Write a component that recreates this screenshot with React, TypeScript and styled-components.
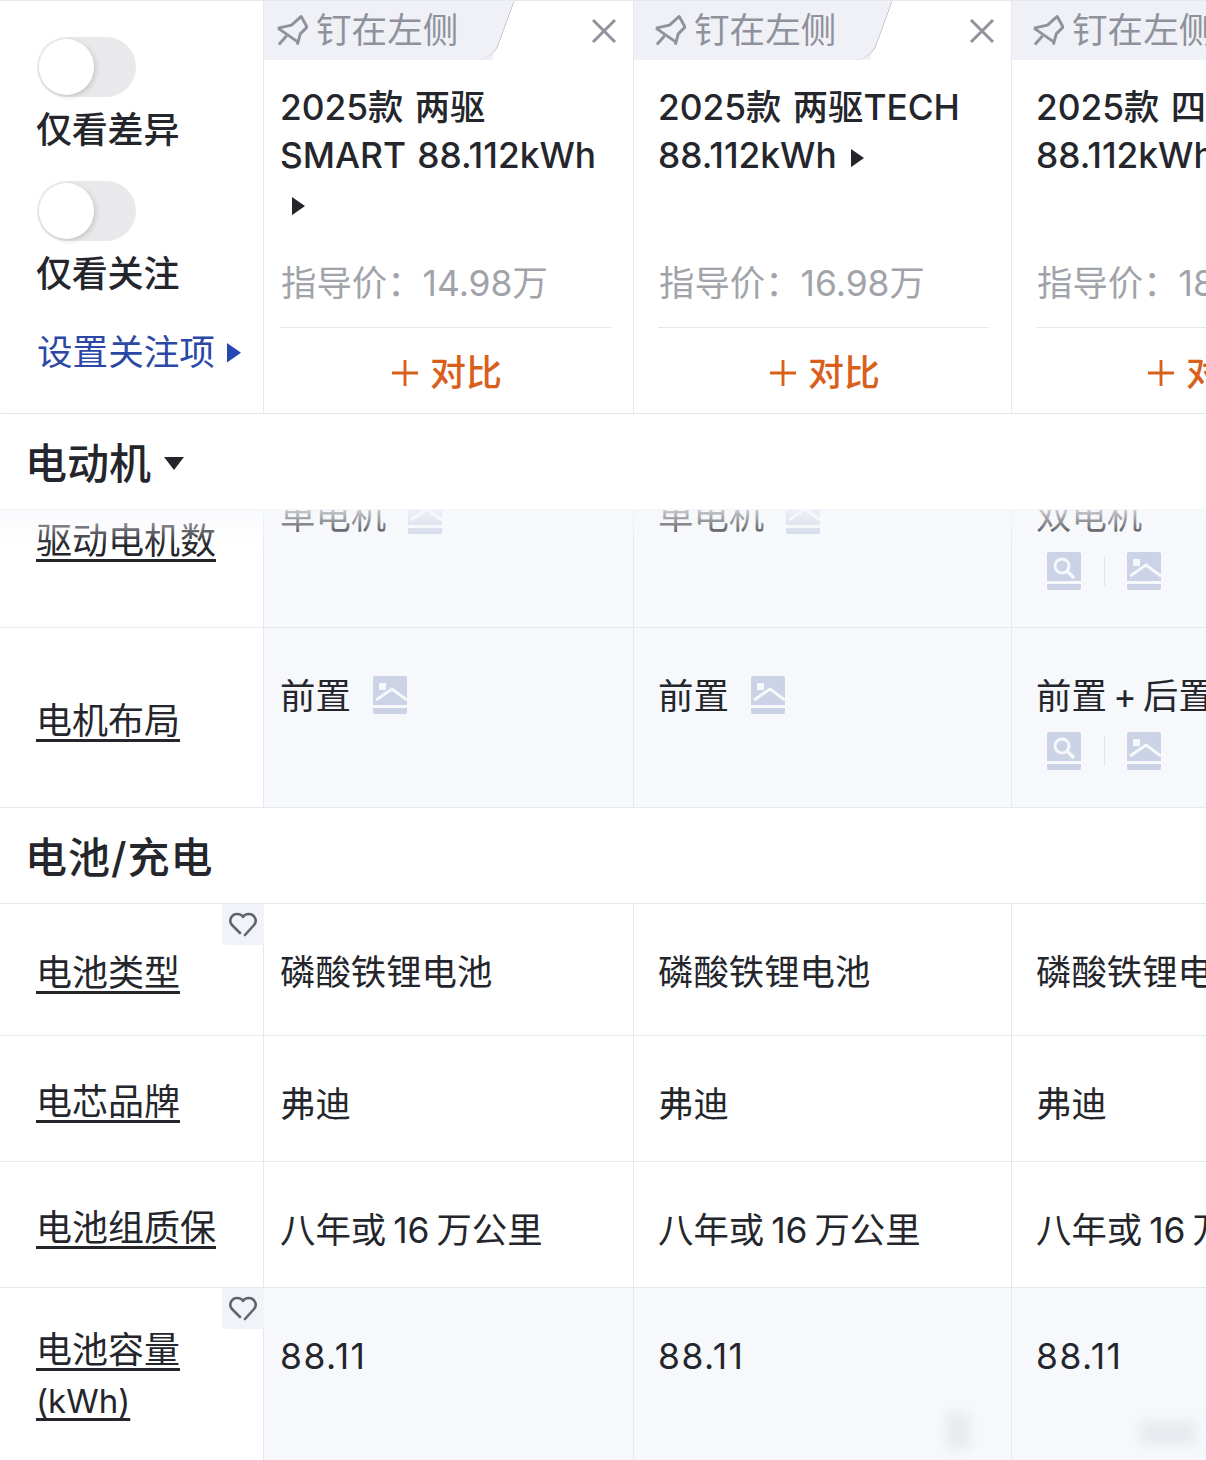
import React from 'react'
import styled, { createGlobalStyle } from 'styled-components'

const GlobalStyle = createGlobalStyle`
    html, body { margin: 0; padding: 0; background: #fff; }
    * { box-sizing: border-box; }
`;

const COLS = '264px 370px 378px 378px';
const LINE = '#e7e8ec';
const INK = '#24262c';

const Page = styled.div`
    position: relative;
    width: 1206px;
    height: 1460px;
    overflow: hidden;
    background: #fff;
    color: ${INK};
    font-family: Inter, "Noto Sans CJK SC", sans-serif;
    font-size: 36px;
    line-height: 48px;
    border-top: 1px solid ${LINE};
`;

const CompareHeader = styled.header`
    display: grid;
    grid-template-columns: ${COLS};
    height: 413px;
    border-bottom: 1px solid ${LINE};
`;

const FilterCell = styled.div`
    border-right: 1px solid ${LINE};
    padding: 36px 0 0 37px;
`;

const Toggle = styled.div`
    position: relative;
    width: 99px;
    height: 60px;
    border-radius: 30px;
    background: #e9e9eb;
    &::after {
        content: '';
        position: absolute;
        left: 2px;
        top: 2px;
        width: 55px;
        height: 56px;
        border-radius: 50%;
        background: #fff;
        box-shadow: 2px 2px 5px rgba(0, 0, 0, .14);
    }
`;

const FilterLabel = styled.div`
    font-weight: 500;
    margin: 9px 0 27px -1px;
    height: 48px;
    letter-spacing: -.2px;
`;

const SettingLink = styled.div`
    display: flex;
    align-items: center;
    gap: 12px;
    margin-top: 31px;
    color: #2b48a6;
    font-size: 35.6px;
    height: 48px;
`;

const CarCell = styled.div<{ $inset: number }>`
    border-right: 1px solid ${LINE};
    --inset: ${p => p.$inset}px;
`;

const TabRow = styled.div`
    display: flex;
    justify-content: space-between;
    align-items: flex-start;
    height: 59px;
    padding-right: 16px;
`;

const PinTab = styled.div<{ $width: number }>`
    position: relative;
    display: flex;
    align-items: center;
    gap: 8px;
    width: ${p => p.$width}px;
    height: 59px;
    padding-left: calc(var(--inset) - 5px);
    background: #f0f1f7;
    color: #8f919c;
    font-size: 35.6px;
    white-space: nowrap;
    &::after {
        content: '';
        position: absolute;
        top: 0;
        bottom: 0;
        right: -11px;
        width: 30px;
        background: #f0f1f7;
        border-right: 1px solid #b9bac4;
        border-bottom-right-radius: 16px;
        transform: skewX(-20deg);
    }
    span { position: relative; z-index: 1; }
`;

const PinGlyph = styled.svg`
    position: relative;
    z-index: 1;
    flex: none;
`;

const CloseButton = styled.svg`
    margin-top: 17px;
    width: 26px;
    height: 26px;
`;

const CarName = styled.div`
    height: 144px;
    margin-top: 24px;
    padding-left: calc(var(--inset) - 1px);
    padding-right: 12px;
    font-size: 35.3px;
    font-weight: 500;
    white-space: pre-line;
    word-spacing: 2px;
`;

const NameArrow = styled.span<{ $inline: boolean }>`
    margin-left: ${p => (p.$inline ? 3 : 12)}px;
`;

const Price = styled.div`
    margin: 32px 0 0;
    padding-left: var(--inset);
    color: #a1a3aa;
    font-size: 35.4px;
    height: 48px;
    white-space: nowrap;
`;

const Divider = styled.div`
    height: 1px;
    margin: 19px 22px 0 calc(var(--inset) - 1px);
    background: ${LINE};
`;

const CompareButton = styled.div`
    display: flex;
    justify-content: center;
    align-items: center;
    gap: 12px;
    margin-top: 21px;
    padding-left: var(--inset);
    padding-right: 20px;
    color: #d8601b;
    font-weight: 500;
    height: 48px;
`;

const SectionBar = styled.div<{ $raised?: boolean }>`
    position: relative;
    z-index: ${p => (p.$raised ? 2 : 0)};
    display: flex;
    align-items: center;
    gap: 13px;
    height: 96px;
    padding: 4px 0 0 25px;
    background: #fff;
    font-size: 42px;
    font-weight: 500;
    letter-spacing: ${p => (p.$raised ? 0 : 1)}px;
    border-bottom: 1px solid ${LINE};
    ${p => p.$raised && `
        box-shadow: 0 2px 6px rgba(30, 32, 50, .04);
        &::after {
            content: '';
            position: absolute;
            left: 0;
            right: 0;
            top: 100%;
            height: 36px;
            background: linear-gradient(rgba(248, 249, 252, .8), rgba(248, 249, 252, 0));
        }
    `}
`;

const Rows = styled.div`
    height: 950px;
    overflow: hidden;
`;

const SpecRow = styled.div<{ $height: number; $pull?: number }>`
    display: grid;
    grid-template-columns: ${COLS};
    height: ${p => p.$height}px;
    margin-top: ${p => p.$pull ?? 0}px;
    border-bottom: 1px solid ${LINE};
`;

const LabelCell = styled.div<{ $lift?: number }>`
    position: relative;
    display: flex;
    align-items: center;
    padding: 6px 0 ${p => p.$lift ?? 0}px 36px;
    background: #fff;
    border-right: 1px solid ${LINE};
`;

const LabelText = styled.span`
    line-height: 50px;
    text-decoration: underline;
    text-decoration-thickness: 3px;
    text-underline-offset: 5px;
`;

const LabelUnit = styled.span`
    font-size: 33px;
`;

const HeartBadge = styled.div`
    position: absolute;
    top: 0;
    right: -1px;
    display: flex;
    align-items: center;
    justify-content: center;
    width: 42px;
    height: 41px;
    background: #f2f3f8;
    border-bottom-left-radius: 4px;
`;

const ValueCell = styled.div<{ $inset: number; $shaded?: boolean; $stacked?: boolean; $numeric?: boolean }>`
    display: flex;
    flex-direction: ${p => (p.$stacked ? 'column' : 'row')};
    align-items: flex-start;
    gap: ${p => (p.$stacked ? '11px' : '22px')};
    padding: 45px 0 0 ${p => p.$inset - 1}px;
    background: ${p => (p.$shaded ? '#f7f8fc' : '#fff')};
    border-right: 1px solid ${LINE};
    font-size: 35.4px;
    letter-spacing: ${p => (p.$numeric ? 1.5 : 0)}px;
    word-spacing: -3px;
    white-space: nowrap;
`;

const IconGroup = styled.div<{ $stacked?: boolean }>`
    display: flex;
    align-items: center;
    gap: 22.5px;
    margin: ${p => (p.$stacked ? '0 0 0 11px' : '3px 0 0')};
`;

const IconSeparator = styled.div`
    width: 1px;
    height: 30px;
    background: #e2e4ec;
`;

const Watermark = styled.div<{ $x: number; $y: number; $w: number; $h: number }>`
    position: absolute;
    left: ${p => p.$x}px;
    top: ${p => p.$y}px;
    width: ${p => p.$w}px;
    height: ${p => p.$h}px;
    background: rgba(120, 122, 130, .1);
    filter: blur(6px);
    pointer-events: none;
`;

const TriangleGlyph = styled.svg`
    vertical-align: middle;
`;

const Triangle = ({ color = INK, size = 13 }: { color?: string; size?: number }) => (
    <TriangleGlyph width={size} height={size * 1.4} viewBox="0 0 10 14">
        <path d="M0 0 L10 7 L0 14 Z" fill={color} />
    </TriangleGlyph>
);

const PinIcon = () => (
    <PinGlyph width="32" height="33" viewBox="0 0 33 33" fill="none" stroke="#8f919c" strokeWidth="3">
        <path d="M2 14 L16 11 L26 2 L32 13 L25 20 L22 31" strokeLinejoin="round" />
        <path d="M2 14 L22 28" />
        <path d="M11 22 L3 31" />
    </PinGlyph>
);

const PictureIcon = () => (
    <svg width="34" height="38" viewBox="0 0 34 38">
        <rect width="34" height="38" rx="2" fill="#ccd3e6" />
        <rect x="0" y="29" width="34" height="3" fill="#f7f8fc" />
        <rect x="6" y="7" width="7" height="7" fill="#f7f8fc" />
        <path d="M3 24 L19 13 L34 24" fill="none" stroke="#f7f8fc" strokeWidth="3" />
    </svg>
);

const SearchIcon = () => (
    <svg width="34" height="38" viewBox="0 0 34 38">
        <rect width="34" height="38" rx="2" fill="#ccd3e6" />
        <rect x="0" y="29" width="34" height="3" fill="#f7f8fc" />
        <circle cx="15" cy="14" r="7" fill="none" stroke="#f7f8fc" strokeWidth="3" />
        <path d="M20 19 L27 26" stroke="#f7f8fc" strokeWidth="3.4" />
    </svg>
);

const HeartIcon = () => (
    <svg width="28" height="25" viewBox="0 0 28 25" fill="none" stroke="#63656c" strokeWidth="2.6" strokeLinecap="round" strokeLinejoin="round">
        <path d="M11 21 L3 13 C-1 8 3 2 8 2 C11 2 13 3 14 5 C15 3 17 2 20 2 C25 2 29 8 25 13 L16 23" />
    </svg>
);

const cars = [
    { name: '2025款 两驱\nSMART 88.112kWh\n', price: '14.98万', inset: 17, tab: 229, arrowInline: false },
    { name: '2025款 两驱TECH\n88.112kWh ', price: '16.98万', inset: 25, tab: 237, arrowInline: true },
    { name: '2025款 四驱TECH\n88.112kWh ', price: '18.98万', inset: 25, tab: 237, arrowInline: true },
];

type Icons = 'picture' | 'both' | undefined;
interface Spec {
    label: React.ReactNode;
    height: number;
    values: string[];
    icons?: Icons[];
    shaded?: boolean;
    pull?: number;
    heart?: boolean;
    numeric?: boolean;
    lift?: number;
}

const motorSpecs: Spec[] = [
    { label: '驱动电机数', height: 180, values: ['单电机', '单电机', '双电机'], icons: ['picture', 'picture', 'both'], shaded: true, pull: -62 },
    { label: '电机布局', height: 180, values: ['前置', '前置', '前置\u2009+\u2009后置'], icons: ['picture', 'picture', 'both'], shaded: true },
];

const WARRANTY = '八年或 16 万公里';

const batterySpecs: Spec[] = [
    { label: '电池类型', height: 132, values: ['磷酸铁锂电池', '磷酸铁锂电池', '磷酸铁锂电池'], heart: true },
    { label: '电芯品牌', height: 126, values: ['弗迪', '弗迪', '弗迪'] },
    { label: '电池组质保', height: 126, values: [WARRANTY, WARRANTY, WARRANTY] },
    { label: <>电池容量<br /><LabelUnit>(kWh)</LabelUnit></>, height: 190, values: ['88.11', '88.11', '88.11'], shaded: true, heart: true, numeric: true, lift: 20 },
];

const SpecRows = ({ specs }: { specs: Spec[] }) => (
    <>
        {specs.map((spec, i) => (
            <SpecRow key={i} $height={spec.height} $pull={spec.pull}>
                <LabelCell $lift={spec.lift}>
                    <LabelText>{spec.label}</LabelText>
                    {spec.heart && <HeartBadge><HeartIcon /></HeartBadge>}
                </LabelCell>
                {spec.values.map((value, j) => {
                    const icons = spec.icons?.[j];
                    const stacked = icons === 'both';
                    return (
                        <ValueCell key={j} $inset={cars[j].inset} $shaded={spec.shaded} $stacked={stacked} $numeric={spec.numeric}>
                            <span>{value}</span>
                            {icons && (
                                <IconGroup $stacked={stacked}>
                                    {stacked && <SearchIcon />}
                                    {stacked && <IconSeparator />}
                                    <PictureIcon />
                                </IconGroup>
                            )}
                        </ValueCell>
                    );
                })}
            </SpecRow>
        ))}
    </>
);

export default function App() {
    return (
        <Page lang="zh-CN">
            <GlobalStyle />
            <CompareHeader>
                <FilterCell>
                    <Toggle />
                    <FilterLabel>仅看差异</FilterLabel>
                    <Toggle />
                    <FilterLabel>仅看关注</FilterLabel>
                    <SettingLink>设置关注项<Triangle color="#2747b4" size={14} /></SettingLink>
                </FilterCell>
                {cars.map(car => (
                    <CarCell key={car.price} $inset={car.inset}>
                        <TabRow>
                            <PinTab $width={car.tab}>
                                <PinIcon />
                                <span>钉在左侧</span>
                            </PinTab>
                            <CloseButton viewBox="0 0 26 26" fill="none" stroke="#8f919c" strokeWidth="3">
                                <path d="M2 2 L24 24 M24 2 L2 24" />
                            </CloseButton>
                        </TabRow>
                        <CarName>
                            {car.name}
                            <NameArrow $inline={car.arrowInline}><Triangle /></NameArrow>
                        </CarName>
                        <Price>指导价：{car.price}</Price>
                        <Divider />
                        <CompareButton>
                            <svg width="26" height="26" viewBox="0 0 27 27" stroke="#d8601b" strokeWidth="3">
                                <path d="M0 13.5 H27 M13.5 0 V27" />
                            </svg>
                            对比
                        </CompareButton>
                    </CarCell>
                ))}
            </CompareHeader>
            <SectionBar $raised>
                电动机
                <svg width="20" height="13" viewBox="0 0 20 13"><path d="M0 0 H20 L10 13 Z" fill={INK} /></svg>
            </SectionBar>
            <Rows>
                <SpecRows specs={motorSpecs} />
                <SectionBar>电池/充电</SectionBar>
                <SpecRows specs={batterySpecs} />
            </Rows>
            <Watermark $x={946} $y={1412} $w={24} $h={36} />
            <Watermark $x={1140} $y={1420} $w={56} $h={24} />
        </Page>
    )
}
